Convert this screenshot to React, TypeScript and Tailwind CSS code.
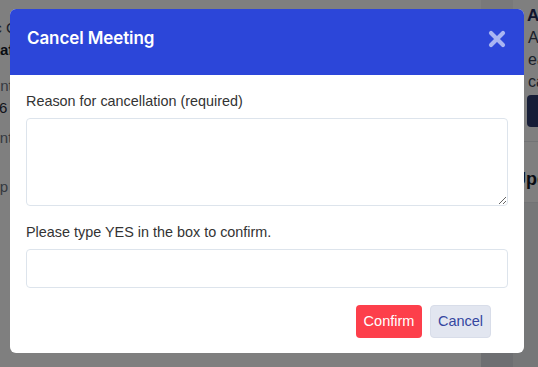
import { useState } from 'react';

function CloseIcon() {
  return (
    <svg width="18" height="18" viewBox="0 0 18 18" fill="none">
      <path d="M3 3L15 15M15 3L3 15" stroke="currentColor" strokeWidth="4.2" strokeLinecap="round" />
    </svg>
  );
}

export default function App() {
  const [reason, setReason] = useState('');
  const [confirm, setConfirm] = useState('');

  return (
    <div className="relative w-[538px] h-[367px] overflow-hidden bg-white font-['Liberation_Sans',Arial,sans-serif]">
      {/* page behind the dialog */}
      <div className="flex h-full">
        <div className="w-[481px] shrink-0 pt-[17px] text-[15px] text-gray-700 leading-[22px] whitespace-nowrap">
          <p className="-ml-[9px]">ic Coffee</p>
          <p className="-ml-[15px] font-semibold text-gray-900">Staff meeting</p>
          <p className="-ml-[19px] mt-[14px] text-gray-500">Contract</p>
          <p className="-ml-[26px] text-gray-800">2026</p>
          <p className="-ml-[26px] mt-[8px] text-gray-500">Event</p>
          <p className="-ml-[31px] mt-[27px] text-gray-500">Setup</p>
        </div>
        <div className="w-[32px] shrink-0 flex flex-col">
          <div className="h-[200px] bg-[#f2f3f5]" />
          <div className="flex-1 bg-[#dcdfe4]" />
        </div>
        <div className="flex-1 min-w-0 flex flex-col whitespace-nowrap">
          <div className="bg-white pl-[14px] pt-[5px] pb-[14px] border-b border-gray-200">
            <p className="text-[17px] font-bold text-[#1e2a5a] leading-[22px]">About</p>
            <div className="pl-[1px]">
              <p className="text-[16px] text-gray-700 leading-[22px]">All</p>
              <p className="text-[16px] text-gray-700 leading-[22px]">each</p>
              <p className="text-[16px] text-gray-700 leading-[22px]">can</p>
            </div>
            <div className="mt-[2px] h-[32px] rounded-l bg-[#2d3a6e]" />
          </div>
          <div className="bg-white pt-[26px] pb-[12px] border-b border-gray-200">
            <p className="text-[18px] font-bold text-gray-900 leading-[22px]">Upcoming</p>
          </div>
          <div className="flex-1 bg-[#eceef1]" />
        </div>
      </div>

      {/* overlay */}
      <div className="absolute inset-0 bg-black/50" />

      {/* dialog */}
      <div className="absolute left-[10px] top-[9px] w-[514px] h-[344px] rounded-[6px] bg-white overflow-hidden flex flex-col">
        <div className="h-[66px] bg-[#2c46d9] flex items-center justify-between pl-[17px] pr-[18px] pb-[6px]">
          <h2 className="text-white text-[17px] font-semibold font-['Inter',sans-serif] tracking-[-0.1px]">Cancel Meeting</h2>
          <button className="text-[#a9b5f2]">
            <CloseIcon />
          </button>
        </div>
        <div className="px-[16px] pt-[17px]">
          <label className="block text-[14.4px] text-[#333] leading-[18px]">Reason for cancellation (required)</label>
          <textarea
            value={reason}
            onChange={(e) => setReason(e.target.value)}
            className="mt-[8px] block w-[482px] h-[88px] rounded-[4px] border border-[#dde4ec] outline-none px-2 py-1"
          />
          <label className="mt-[17px] block text-[14.4px] text-[#333] leading-[18px]">Please type YES in the box to confirm.</label>
          <input
            value={confirm}
            onChange={(e) => setConfirm(e.target.value)}
            className="mt-[8px] block w-[482px] h-[39px] rounded-[4px] border border-[#dde4ec] outline-none px-2"
          />
          <div className="mt-[17px] flex justify-end gap-[8px] pr-[17px]">
            <button className="h-[33px] w-[66px] rounded-[4px] bg-[#fd3f4b] text-white text-[14.5px]">Confirm</button>
            <button className="h-[33px] w-[61px] rounded-[4px] bg-[#e2e6f0] border border-[#d8dde9] text-[#3546a0] text-[14.5px]">Cancel</button>
          </div>
        </div>
      </div>
    </div>
  );
}
